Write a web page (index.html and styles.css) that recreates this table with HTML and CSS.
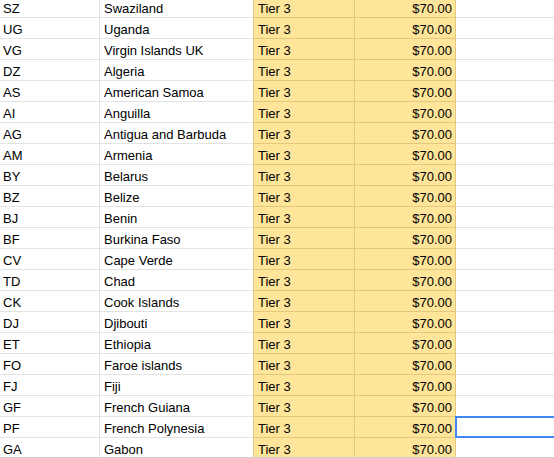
FILE: index.html
```html
<!DOCTYPE html>
<html>
<head>
<meta charset="utf-8">
<link rel="stylesheet" href="styles.css">
</head>
<body>
<div class="viewport">
  <div class="sheet" id="sheet"></div>
  <div class="selection"></div>
  <div class="hscroll"></div>
</div>
<script>
var rows = [
  ["SZ","Swaziland"],["UG","Uganda"],["VG","Virgin Islands UK"],["DZ","Algeria"],
  ["AS","American Samoa"],["AI","Anguilla"],["AG","Antigua and Barbuda"],["AM","Armenia"],
  ["BY","Belarus"],["BZ","Belize"],["BJ","Benin"],["BF","Burkina Faso"],
  ["CV","Cape Verde"],["TD","Chad"],["CK","Cook Islands"],["DJ","Djibouti"],
  ["ET","Ethiopia"],["FO","Faroe islands"],["FJ","Fiji"],["GF","French Guiana"],
  ["PF","French Polynesia"],["GA","Gabon"]
];
var s = document.getElementById("sheet");
rows.forEach(function (r) {
  s.insertAdjacentHTML("beforeend",
    '<div class="cell">' + r[0] + '</div>' +
    '<div class="cell name">' + r[1] + '</div>' +
    '<div class="cell tier">Tier 3</div>' +
    '<div class="cell tier price">$70.00</div>' +
    '<div class="cell empty"></div>');
});
</script>
</body>
</html>
```
FILE: styles.css
```css
html, body {
  margin: 0;
  padding: 0;
  background: #ffffff;
  overflow: hidden;
}
.viewport {
  position: relative;
  width: 554px;
  height: 458px;
  overflow: hidden;
}
.sheet {
  display: grid;
  grid-template-columns: 100px 154px 101px 101px 1fr;
  margin-top: -3px;
  font-family: "Liberation Sans", Arial, sans-serif;
  font-size: 13px;
  color: #000000;
}
.cell {
  box-sizing: border-box;
  height: 21px;
  padding: 3px 3px 0 3px;
  line-height: 17px;
  white-space: nowrap;
  overflow: hidden;
  border-right: 1px solid #e2e3e3;
  border-bottom: 1px solid #e2e3e3;
}
.name {
  padding-left: 4px;
  border-right-color: #e2c77e;
}
.tier {
  background: #ffe599;
  border-right-color: #e2c77e;
  border-bottom-color: #e2c77e;
  padding-left: 4px;
}
.price {
  text-align: right;
}
.empty {
  border-right: none;
}
.selection {
  position: absolute;
  left: 455px;
  top: 416px;
  width: 110px;
  height: 22px;
  box-sizing: border-box;
  border: 2px solid #4285f4;
}
.hscroll {
  position: absolute;
  left: 0;
  right: 0;
  top: 457px;
  height: 1px;
  background: #cfcfcf;
}
```
